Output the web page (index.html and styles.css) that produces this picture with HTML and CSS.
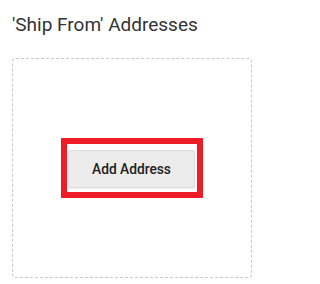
FILE: index.html
```html
<!DOCTYPE html>
<html>
<head>
<meta charset="utf-8">
<link rel="stylesheet" href="styles.css">
</head>
<body>
<div class="page">
  <h2 class="title">'Ship From' Addresses</h2>
  <div class="dropzone">
    <div class="highlight">
      <button class="btn">Add Address</button>
    </div>
  </div>
</div>
</body>
</html>
```
FILE: styles.css
```css
* { box-sizing: border-box; }
html, body { margin: 0; padding: 0; background: #fff; }
body { font-family: Roboto, "Liberation Sans", Arial, sans-serif; color: #333; }
.page { padding: 13px 10px 0 12px; width: 262px; }
.title {
  margin: 0;
  font-size: 19px;
  font-weight: 400;
  line-height: 24px;
  color: #333;
}
.dropzone {
  margin-top: 21px;
  width: 240px;
  height: 220px;
  border: 1px dashed #c8c8c8;
  border-radius: 4px;
  display: flex;
  align-items: center;
  justify-content: center;
}
.highlight {
  border: 6px solid #ee1c25;
  padding: 6px 2px 4px 1px;
  display: flex;
}
.btn {
  width: 127px;
  height: 38px;
  background: #ececec;
  border: 1px solid #dcdcdc;
  border-radius: 2px;
  box-shadow: 0 1px 1px rgba(0,0,0,0.06);
  font-family: Roboto, "Liberation Sans", Arial, sans-serif;
  font-size: 13.75px;
  font-weight: 500;
  color: #222;
  padding: 0;
}
```
